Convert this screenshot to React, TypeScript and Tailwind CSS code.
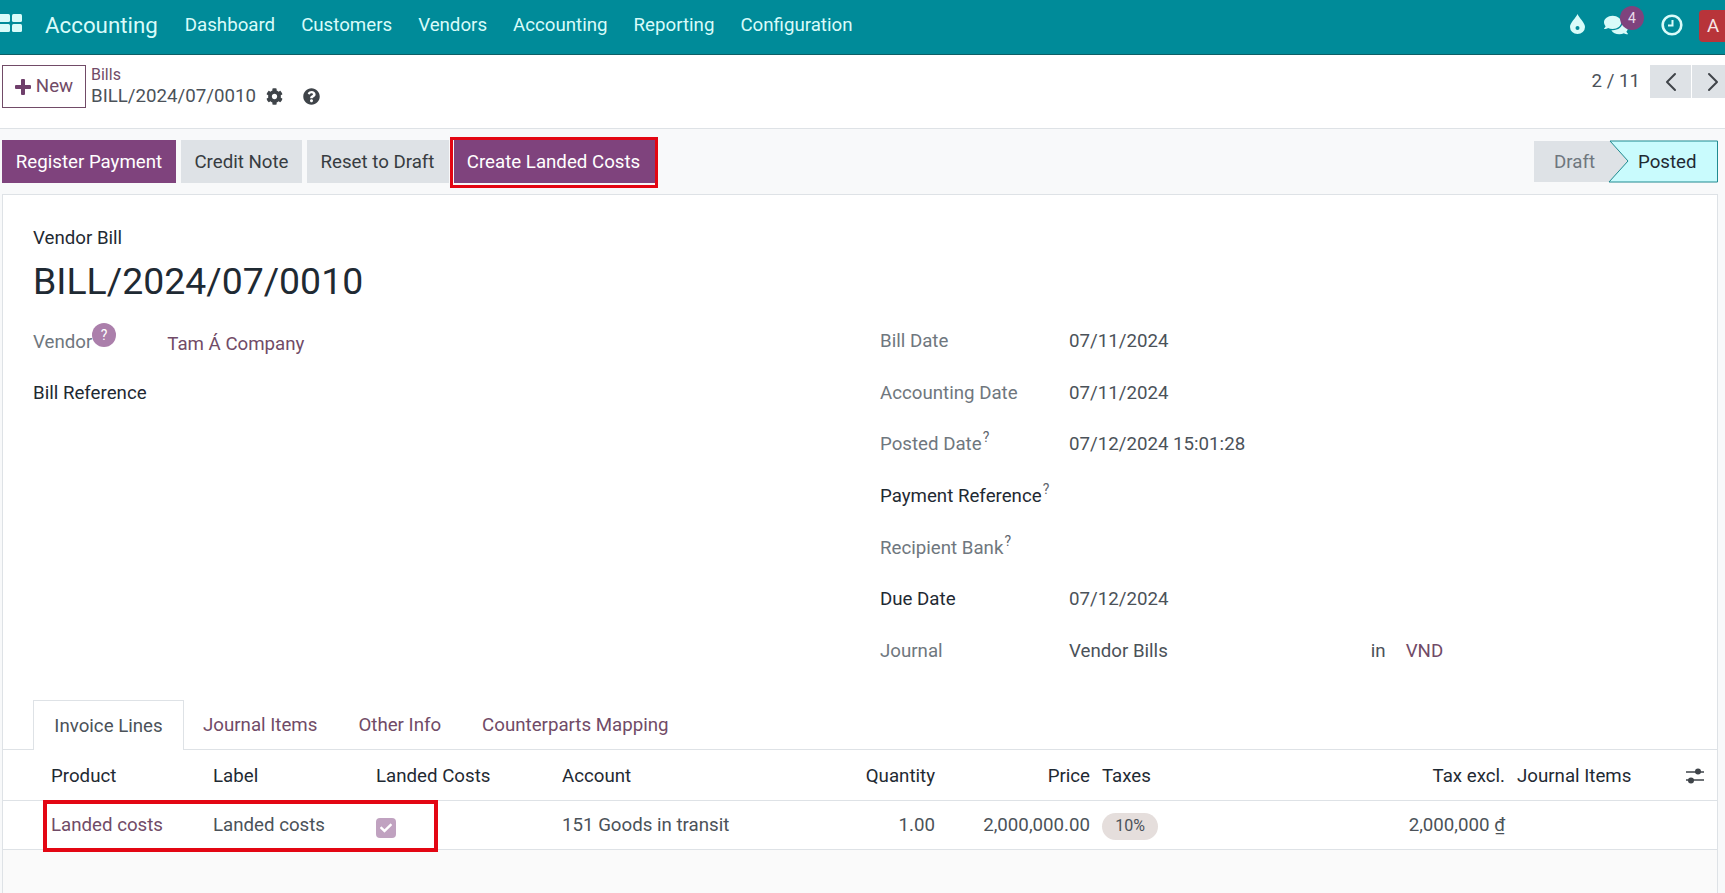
import React from "react";
import { ChevronLeft, ChevronRight } from "lucide-react";
import { FaCog, FaQuestionCircle, FaComments, FaCheck } from "react-icons/fa";

const Nav = ["Dashboard", "Customers", "Vendors", "Accounting", "Reporting", "Configuration"];

function Sup() {
  return <sup className="text-[14px] text-[#5f666d] ml-px top-[-8px]">?</sup>;
}

function Row({ label, value, labelClass = "text-[#6f777e]", sup, children }: { label: string; value?: string; labelClass?: string; sup?: boolean; children?: React.ReactNode }) {
  return (
    <div className="flex items-center h-[51.7px]">
      <div className={`w-[189px] ${labelClass}`}>{label}{sup && <Sup />}</div>
      <div className="text-[#4b5259]">{value}</div>
      {children}
    </div>
  );
}

export default function App() {
  return (
    <div className="w-[1725px] h-[893px] overflow-hidden flex flex-col bg-[#f8f9fa] text-[18.7px] text-[#4b5259] font-['Roboto',sans-serif]">
      <header className="h-[55px] shrink-0 flex items-center pb-[4px] bg-[#008b99] border-b border-[#0d5f66] text-[#d9fbf9]">
        <svg width="22" height="18" viewBox="0 0 22 18" className="shrink-0 -mt-[4px]" fill="#d9fbf9">
          <rect x="-1" y="0" width="11" height="8" rx="1.5" />
          <rect x="12" y="0" width="10" height="8" rx="1.5" />
          <rect x="-1" y="10" width="11" height="8" rx="1.5" />
          <rect x="12" y="10" width="10" height="8" rx="1.5" />
        </svg>
        <div className="ml-[23px] text-[22.3px] mr-[27px] mt-[2px]">Accounting</div>
        <nav className="flex gap-[26px]">
          {Nav.map((n) => <span key={n}>{n}</span>)}
        </nav>
        <div className="ml-auto flex items-center">
          <svg width="15" height="20" viewBox="0 0 15 20" className="mr-[19px] -mt-[2px]">
            <path d="M7.5 0C9 4 15 8.5 15 13a7.5 7 0 0 1-15 0C0 8.5 6 4 7.5 0Z" fill="#d9fbf9" />
            <circle cx="7.5" cy="14" r="2" fill="#008b99" />
          </svg>
          <div className="relative mr-[33px]">
            <FaComments className="text-[24px]" />
            <span className="absolute left-[16px] top-[-7px] w-[24px] h-[24px] rounded-full bg-[#7f437d] text-[14px] flex items-center justify-center text-[#e9dbe9]">4</span>
          </div>
          <svg width="22" height="22" viewBox="0 0 22 22" className="mr-[16px]" fill="none" stroke="#d9fbf9">
            <circle cx="11" cy="11" r="9.3" strokeWidth="2.6" />
            <path d="M11.5 6v5.5H7" strokeWidth="2" />
          </svg>
          <div className="w-[26px] h-[32px] mt-[2px] rounded-l-[4px] bg-[#b8343a] text-[#f7e6e6] flex items-center pl-[8px]">A</div>
        </div>
      </header>

      <div className="h-[74px] shrink-0 bg-white border-b border-[#dee2e6] flex items-start pl-[2px] pt-[10px]">
        <button className="w-[84px] h-[43px] border border-[#714b67] flex items-center justify-center gap-[5px] text-[#714b67] bg-white">
          <svg width="16" height="16" viewBox="0 0 16 16" fill="#6f3f6b"><path d="M6 1a1 1 0 0 1 1-1h2a1 1 0 0 1 1 1v5h5a1 1 0 0 1 1 1v2a1 1 0 0 1-1 1h-5v5a1 1 0 0 1-1 1H7a1 1 0 0 1-1-1v-5H1a1 1 0 0 1-1-1V7a1 1 0 0 1 1-1h5z" /></svg>
          New
        </button>
        <div className="ml-[5px]">
          <div className="text-[#714b67] text-[16px] leading-[20px]">Bills</div>
          <div className="flex items-center leading-[24px] h-[24px] -mt-[1px]">
            <span>BILL/2024/07/0010</span>
            <FaCog className="ml-[10px] text-[#3f4449] text-[17px]" />
            <FaQuestionCircle className="ml-[20px] text-[#3f4449] text-[17px]" />
          </div>
        </div>
        <div className="ml-auto flex items-center">
          <span className="mr-[10px] -mt-[1px]">2 / 11</span>
          <div className="w-[41px] h-[33px] bg-[#dee2e6] flex items-center justify-center text-[#3f4449]"><ChevronLeft size={32} strokeWidth={1.5} /></div>
          <div className="w-[41px] h-[33px] -mr-[8px] ml-px bg-[#dee2e6] flex items-center justify-center text-[#3f4449]"><ChevronRight size={32} strokeWidth={1.5} /></div>
        </div>
      </div>

      <div className="h-[65px] shrink-0 flex items-start pl-[2px] pr-[7px] pt-[11px]">
        <div className="flex gap-[5px]">
          <button className="h-[43px] w-[174px] pt-px bg-[#7f437d] text-white">Register Payment</button>
          <button className="h-[43px] w-[121px] pt-px bg-[#dee2e6] text-[#373c41]">Credit Note</button>
          <button className="h-[43px] w-[142px] pt-px pr-px bg-[#dee2e6] text-[#373c41]">Reset to Draft</button>
          <div className="relative">
            <button className="h-[43px] w-[201px] pt-px pr-[2px] bg-[#7f437d] text-white">Create Landed Costs</button>
            <div className="absolute -left-[4px] -top-[3px] -right-[3px] -bottom-[5px] border-3 border-[#e30613]" />
          </div>
        </div>
        <div className="ml-auto relative w-[184px] h-[43px] flex items-center">
          <div className="absolute inset-y-[1px] left-0 w-[95px] bg-[#dee2e6]" />
          <svg width="184" height="43" viewBox="0 0 184 43" className="absolute inset-0">
            <polygon points="76,1 183.5,1 183.5,42 75,42 94,21" fill="#c9fbfd" stroke="#1f8a90" />
          </svg>
          <span className="relative ml-[20px] pt-[2px] text-[#6f777e]">Draft</span>
          <span className="relative ml-[43px] pt-[2px] text-[#1f2a33]">Posted</span>
        </div>
      </div>

      <main className="flex-1 ml-[2px] mr-[7px] flex flex-col border-l border-r border-t border-[#dee2e6] bg-white">
        <div className="flex-1 bg-white px-[30px] pt-[30px]">
          <div className="text-[#1f2a33] leading-[26px]">Vendor Bill</div>
          <h1 className="text-[37.4px] leading-[46px] text-[#1f2a33] mt-[7px]">BILL/2024/07/0010</h1>
          <div className="flex mt-[11px]">
            <div className="w-[847px] pt-[2px]">
              <div className="flex h-[51px] items-center">
                <span className="text-[#6f777e] relative">Vendor<span className="absolute left-[59px] top-[-5px] w-[24px] h-[24px] rounded-full bg-[#ab7fab] text-white text-[14px] flex items-center justify-center">?</span></span>
                <span className="ml-[75px] mt-[3px] text-[#714b67]">Tam Á Company</span>
              </div>
              <div className="h-[51px] flex items-center text-[#1f2a33]">Bill Reference</div>
            </div>
            <div className="flex-1">
              <Row label="Bill Date" value="07/11/2024" />
              <Row label="Accounting Date" value="07/11/2024" />
              <Row label="Posted Date" sup value="07/12/2024 15:01:28" />
              <Row label="Payment Reference" sup labelClass="text-[#1f2a33]" />
              <Row label="Recipient Bank" sup />
              <Row label="Due Date" value="07/12/2024" labelClass="text-[#1f2a33]" />
              <Row label="Journal" value="Vendor Bills">
                <span className="ml-[203px]">in</span>
                <span className="ml-[20px] text-[#714b67]">VND</span>
              </Row>
            </div>
          </div>
        </div>

        <div className="h-[50px] shrink-0 flex items-end pl-[30px] border-b border-[#dee2e6] bg-white">
          <div className="h-[50px] w-[151px] -mb-px pt-[2px] border border-b-0 border-[#dee2e6] bg-white flex items-center justify-center">Invoice Lines</div>
          <div className="h-[50px] pt-[2px] flex items-center text-[#714b67] ml-[19px] gap-[41px]">
            <span>Journal Items</span>
            <span>Other Info</span>
            <span>Counterparts Mapping</span>
          </div>
        </div>

        <div className="h-[51px] shrink-0 grid grid-cols-[162px_163px_186px_213px_160px_155px_300px_115px_181px_1fr] items-center pl-[48px] pt-[2px] border-b border-[#dee2e6] text-[#1f2a33] bg-white">
          <div>Product</div>
          <div>Label</div>
          <div>Landed Costs</div>
          <div>Account</div>
          <div className="text-right">Quantity</div>
          <div className="text-right">Price</div>
          <div className="pl-[12px]">Taxes</div>
          <div className="text-right">Tax excl.</div>
          <div className="pl-[12px]">Journal Items</div>
          <div>
            <svg width="18" height="16" viewBox="0 0 18 16" stroke="#3f4449" fill="#3f4449" strokeWidth="1.4">
              <path d="M0 4h18M0 12h18" />
              <circle cx="12" cy="3.5" r="3" stroke="none" />
              <circle cx="5" cy="12.5" r="3" stroke="none" />
            </svg>
          </div>
        </div>

        <div className="relative h-[49px] shrink-0 grid grid-cols-[162px_163px_186px_213px_160px_155px_300px_115px_181px_1fr] items-center pl-[48px] pt-px border-b border-[#dee2e6] bg-white">
          <div className="text-[#714b67]">Landed costs</div>
          <div>Landed costs</div>
          <div><span className="w-[20px] h-[20px] rounded-[4px] bg-[#c0a2c0] flex items-center justify-center text-white text-[12px] mt-[5px]"><FaCheck /></span></div>
          <div>151 Goods in transit</div>
          <div className="text-right">1.00</div>
          <div className="text-right">2,000,000.00</div>
          <div className="pl-[12px]"><span className="inline-flex w-[56px] h-[27px] items-center justify-center rounded-full bg-[#e5dedc] text-[16px]">10%</span></div>
          <div className="text-right whitespace-nowrap">2,000,000 ₫</div>
          <div />
          <div />
          <div className="absolute left-[40px] top-[-1px] w-[395px] h-[52px] border-4 border-[#e30613]" />
        </div>
        <div className="h-[43px] shrink-0 bg-[#fafafa]" />
      </main>
    </div>
  );
}
